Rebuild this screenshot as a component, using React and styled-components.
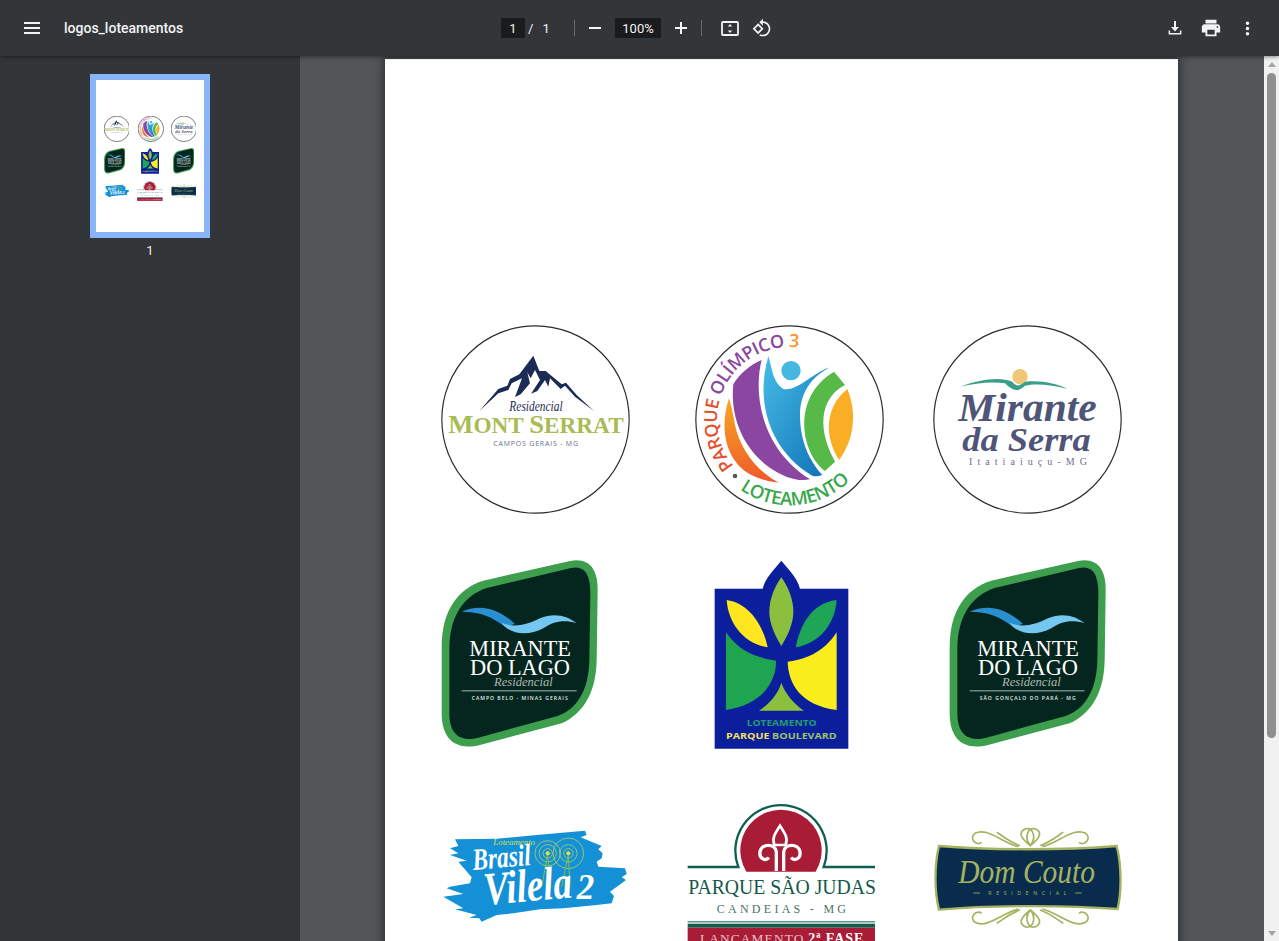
import styled, { createGlobalStyle } from 'styled-components'

const GlobalStyle = createGlobalStyle`
    html, body {
        margin: 0;
        height: 100%;
        overflow: hidden;
        background: #525659;
        font-family: Roboto, "Liberation Sans", sans-serif;
    }
`

const Shell = styled.div`
    width: 1279px;
    height: 941px;
    display: flex;
    flex-direction: column;
    overflow: hidden;
`
const Toolbar = styled.header`
    position: relative;
    z-index: 2;
    flex: 0 0 56px;
    display: flex;
    align-items: center;
    background: #323639;
    color: #f1f3f4;
    box-shadow: 0 1px 4px rgba(0, 0, 0, .45);
`
const LeftTools = styled.div`
    flex: 0 0 501px;
    display: flex;
    align-items: center;
    padding-left: 24px;
    box-sizing: border-box;
`
const Title = styled.span`
    margin-left: 24px;
    font-size: 14px;
    font-weight: 500;
`
const CenterTools = styled.div`
    display: flex;
    align-items: center;
`
const DarkField = styled.div`
    width: ${({ $w }) => $w}px;
    height: 20px;
    margin: ${({ $m }) => $m || 0};
    display: flex;
    align-items: center;
    justify-content: center;
    background: #191b1c;
    font-size: 13px;
`
const PageTotal = styled.div`
    width: 49px;
    display: flex;
    gap: 9px;
    padding-left: 3px;
    box-sizing: border-box;
    font-size: 13px;
`
const Divider = styled.span`
    width: 1px;
    height: 16px;
    margin: ${({ $m }) => $m};
    background: #696d70;
`
const IconButton = styled.div`
    width: ${({ $w }) => $w || 32}px;
    height: 32px;
    margin: ${({ $m }) => $m || 0};
    display: flex;
    align-items: center;
    justify-content: center;
    color: #f1f3f4;
`
const RightTools = styled.div`
    margin-left: auto;
    padding-right: 14px;
    display: flex;
    align-items: center;
`

const Body = styled.div`
    flex: 1;
    min-height: 0;
    display: flex;
`
const Sidebar = styled.aside`
    flex: 0 0 300px;
    display: flex;
    flex-direction: column;
    align-items: center;
    padding-top: 18px;
    box-sizing: border-box;
    background: #323639;
`
const ThumbFrame = styled.div`
    width: 108px;
    height: 152px;
    border: 6px solid #8ab4f8;
    background: #fff;
    overflow: hidden;
`
const ThumbLabel = styled.div`
    margin-top: 5px;
    color: #e8eaed;
    font-size: 13px;
    line-height: 16px;
`
const Viewer = styled.main`
    flex: 1;
    min-width: 0;
    padding: 3px 0 0 85px;
    box-sizing: border-box;
    background: #525659;
    overflow: hidden;
`
const Sheet = styled.div`
    --ring: ${({ $ring }) => $ring};
    width: 793px;
    height: 1122px;
    padding-top: 266px;
    box-sizing: border-box;
    background: #fff;
    zoom: ${({ $zoom }) => $zoom};
`
const ShadowedPage = styled.div`
    width: 793px;
    box-shadow: 0 0 9px 2px rgba(0, 0, 0, .45);
`
const LogoRow = styled.div`
    display: grid;
    grid-template-columns: ${({ $cols }) => $cols};
    padding-left: ${({ $left }) => $left}px;
    margin-bottom: ${({ $after }) => $after}px;
`
const LogoSvg = styled.svg`
    display: block;
`
const Ring = styled.circle`
    fill: #fff;
    stroke: #2b2b2b;
    stroke-width: var(--ring);
`
const Scrollbar = styled.div`
    flex: 0 0 15px;
    display: flex;
    flex-direction: column;
    align-items: center;
    background: #f1f1f1;
`
const ScrollArrow = styled.div`
    width: 0;
    height: 0;
    margin: ${({ $m }) => $m};
    border-left: 4px solid transparent;
    border-right: 4px solid transparent;
    ${({ $down }) => ($down ? 'border-top: 5px solid #a3a3a3;' : 'border-bottom: 5px solid #a3a3a3;')}
`
const ScrollThumb = styled.div`
    width: 9px;
    height: 665px;
    border-radius: 5px;
    background: #8f8f8f;
`

const LogoText = styled.text`
    font-family: ${({ $font }) => $font || '"Liberation Serif", serif'};
    font-size: ${({ $size }) => $size}px;
    font-weight: ${({ $weight }) => $weight || 400};
    font-style: ${({ $italic }) => ($italic ? 'italic' : 'normal')};
    fill: ${({ $fill }) => $fill};
`
// text that gets squeezed into the width the logo has, glyphs and all
const FitText = styled(LogoText).attrs({ lengthAdjust: 'spacingAndGlyphs' })``
const SANS = '"Open Sans", "Liberation Sans", sans-serif'

const MenuIcon = () => (
    <svg width="16" height="12" viewBox="0 0 16 12" fill="currentColor">
        <rect width="16" height="2" />
        <rect y="5" width="16" height="2" />
        <rect y="10" width="16" height="2" />
    </svg>
)
const MinusIcon = () => (
    <svg width="14" height="14" viewBox="0 0 14 14" fill="currentColor"><rect x="1" y="6" width="12" height="2" /></svg>
)
const PlusIcon = () => (
    <svg width="14" height="14" viewBox="0 0 14 14" fill="currentColor">
        <rect x="1" y="6" width="12" height="2" />
        <rect x="6" y="1" width="2" height="12" />
    </svg>
)
const FitIcon = () => (
    <svg width="18" height="15" viewBox="0 0 18 15" fill="none">
        <rect x="1" y="1" width="16" height="13" rx="1" stroke="currentColor" strokeWidth="1.8" />
        <path d="M9 2.9l2.2 2.5H6.8zM9 12.1l2.2-2.5H6.8z" fill="currentColor" />
    </svg>
)
const RotateIcon = () => (
    <svg width="20" height="20" viewBox="0 0 24 24" fill="currentColor">
        <path d="M7.34 6.41L.86 12.9l6.49 6.48 6.49-6.48-6.5-6.49zM3.69 12.9l3.66-3.66L11 12.9l-3.66 3.66-3.65-3.66zm15.67-6.26C17.61 4.88 15.3 4 13 4V.76L8.76 5 13 9.24V6c1.79 0 3.58.68 4.95 2.05 2.73 2.73 2.73 7.17 0 9.9C16.58 19.32 14.79 20 13 20c-.97 0-1.94-.21-2.84-.61l-1.49 1.49C10.02 21.62 11.51 22 13 22c2.3 0 4.61-.88 6.36-2.64 3.52-3.51 3.52-9.21 0-12.72z" />
    </svg>
)
const DownloadIcon = () => (
    <svg width="14" height="14" viewBox="0 0 14 14" fill="currentColor">
        <path d="M6 0h2v6h3L7 10.4 3 6h3z" />
        <path d="M.6 9.5h1.5V12h9.8V9.5h1.5V13.6H.6z" />
    </svg>
)
const PrintIcon = () => (
    <svg width="22" height="22" viewBox="0 0 24 24" fill="currentColor">
        <path d="M19 8H5c-1.66 0-3 1.34-3 3v6h4v4h12v-4h4v-6c0-1.66-1.34-3-3-3zm-3 11H8v-5h8v5zm3-7c-.55 0-1-.45-1-1s.45-1 1-1 1 .45 1 1-.45 1-1 1zm-1-9H6v4h12V3z" />
    </svg>
)
const MoreIcon = () => (
    <svg width="21" height="21" viewBox="0 0 24 24" fill="currentColor">
        <path d="M12 8c1.1 0 2-.9 2-2s-.9-2-2-2-2 .9-2 2 .9 2 2 2zm0 2c-1.1 0-2 .9-2 2s.9 2 2 2 2-.9 2-2-.9-2-2-2zm0 6c-1.1 0-2 .9-2 2s.9 2 2 2 2-.9 2-2-.9-2-2-2z" />
    </svg>
)

const MontSerrat = () => (
    <LogoSvg width="189" height="189" viewBox="33 30 567 567">
        <Ring cx="316.5" cy="313.5" r="281" />
        <path fill="#1c2b55" d="M148 288L205 222L232 212L240 192L268 178L310 122L328 168L347 168L395 208L408 203L440 240L492 288L435 245L405 212L392 222L360 190L355 215L345 195L322 228L303 236L330 195L315 165L302 190L292 172L300 205L272 238L255 246L276 190L245 205L235 225L205 235Z" />
        <FitText x="238" y="288" $size="42" $italic $fill="#1c2b55" textLength="160">Residencial</FitText>
        <FitText x="55" y="355" $size="68" $weight="700" $fill="#a9bb55" textLength="526"><tspan fontSize="78">M</tspan>ONT <tspan fontSize="78">S</tspan>ERRAT</FitText>
        <LogoText x="190" y="394" $size="21" $font={SANS} $fill="#68708f" textLength="254">CAMPOS GERAIS - MG</LogoText>
    </LogoSvg>
)

const ParqueOlimpico = () => (
    <LogoSvg width="189" height="189" viewBox="30 30 567 567">
        <defs>
            <linearGradient id="olimpOrange" x1="0" y1="0" x2="0" y2="1">
                <stop offset="0" stopColor="#f7a823" />
                <stop offset="1" stopColor="#f0592b" />
            </linearGradient>
            <linearGradient id="olimpBlue" x1="0" y1="0" x2="1" y2="1">
                <stop offset="0" stopColor="#45bde6" />
                <stop offset="1" stopColor="#0f6fb5" />
            </linearGradient>
            <path id="olimpTop" d="M146.5 453.5A218 218 0 0 1 444 139" />
            <path id="olimpBottom" d="M164.5 523.5A258 258 0 0 0 496 496" />
        </defs>
        <Ring cx="313.5" cy="313.5" r="281" />
        <path fill="url(#olimpOrange)" d="M132 250C105 330 115 430 195 478C225 494 255 500 282 503C215 470 165 400 150 330C145 300 140 275 132 250Z" />
        <path fill="#8a46a0" d="M145 208C165 175 195 150 230 135C205 230 225 400 375 493C340 500 300 490 250 455C170 395 135 300 145 208Z" />
        <path fill="url(#olimpBlue)" d="M250 124C262 160 262 200 295 222C340 230 385 170 437 157C385 180 345 230 345 300C345 380 375 440 412 480C395 485 385 485 378 480C270 415 205 280 250 124Z" />
        <circle cx="318" cy="167" r="29" fill="#45b8e0" />
        <path fill="#57b947" d="M447 170L480 210C420 240 385 320 450 440L420 468C345 410 320 245 447 170Z" />
        <path fill="#f9ae26" d="M487 222C515 290 510 370 462 435C420 370 415 280 487 222Z" />
        <circle cx="150" cy="483" r="7" fill="#55585c" />
        <LogoText $font={SANS} $size="54" $weight="600" $fill="#8a46a0">
            <textPath href="#olimpTop" textLength="522">
                <tspan fill="#e4502e">PARQUE </tspan>OLÍMPICO <tspan fill="#f39a2a">3</tspan>
            </textPath>
        </LogoText>
        <LogoText $font={SANS} $size="56" $weight="600" $fill="#37a84c">
            <textPath href="#olimpBottom" textLength="360">LOTEAMENTO</textPath>
        </LogoText>
    </LogoSvg>
)

const MiranteSerra = () => (
    <LogoSvg width="189" height="189" viewBox="24 30 567 567">
        <Ring cx="307.5" cy="313.5" r="281" />
        <circle cx="285" cy="185" r="23" fill="#eec877" />
        <path fill="#3a9f88" d="M105 215C170 192 225 185 262 200C275 215 280 215 300 200C350 195 395 205 428 222C380 208 330 205 300 212C275 235 262 225 240 205C200 198 150 205 105 215Z" />
        <FitText x="100" y="318" $size="118" $weight="700" $italic $fill="#4f5578" textLength="415">Mirante</FitText>
        <FitText x="112" y="408" $size="104" $weight="700" $italic $fill="#4f5578" textLength="385">da Serra</FitText>
        <LogoText x="132" y="450" $size="30" $fill="#6a7090" textLength="354">Itatiaiuçu-MG</LogoText>
    </LogoSvg>
)

const MiranteLago = ({ place }) => (
    <LogoSvg width="157" height="189" viewBox="33 30 471 567">
        <path fill="#3d9e4e" d="M420 33C480 22 503 60 503 120L500 330C498 440 450 495 395 520L150 585C70 605 35 560 35 490L35 290C35 180 85 115 160 92Z" />
        <path fill="#05261f" d="M423 54C463 45 481 72 481 130L478 330C476 425 438 478 383 498L145 563C85 578 58 548 58 490L58 290C60 197 102 137 170 114Z" />
        <path fill="#2a8fd0" d="M95 185C140 165 195 165 255 222L225 230C185 200 150 185 95 185Z" />
        <path fill="#74c7f0" d="M215 218C250 235 290 225 330 205C370 188 410 195 440 220C400 208 370 215 340 235C290 262 235 250 215 218Z" />
        <FitText x="118" y="318" $size="72" $fill="#fff" textLength="305">MIRANTE</FitText>
        <FitText x="120" y="375" $size="72" $fill="#fff" textLength="300">DO LAGO</FitText>
        <FitText x="192" y="408" $size="38" $italic $fill="#aeb8b0" textLength="176">Residencial</FitText>
        <rect x="95" y="421" width="345" height="3" fill="#a9b3ac" />
        <LogoText x="125" y="450" $size="15" $weight="600" $font={SANS} $fill="#e6ebe8" textLength="288">{place}</LogoText>
    </LogoSvg>
)

const Boulevard = () => (
    <LogoSvg width="135" height="189" viewBox="42 30 405 567">
        <path fill="#0b1f9c" d="M44 116H188C195 85 225 55 244 32C263 55 293 85 300 116H445V596H44Z" />
        <path fill="#8dbf3f" d="M244 82C265 110 280 150 280 185C280 225 260 260 244 288C228 260 208 225 208 185C208 150 223 110 244 82Z" />
        <path fill="#ffe61f" d="M80 150C150 160 190 230 203 292C130 280 85 220 80 150Z" />
        <path fill="#1ea656" d="M410 150C330 160 300 230 287 292C360 280 405 220 410 150Z" />
        <path fill="#1fa450" d="M78 247C120 310 180 325 228 332C230 390 190 465 78 480Z" />
        <path fill="#f9ee1c" d="M410 247C370 310 310 330 263 335C265 400 300 465 410 480Z" />
        <path fill="#8dbf3f" d="M244 398C255 430 280 460 312 482H177C210 460 235 430 244 398Z" />
        <FitText x="140" y="527" $size="26" $weight="700" $font={SANS} $fill="#1f9e6e" textLength="210">LOTEAMENTO</FitText>
        <FitText x="78" y="567" $size="27" $weight="700" $font={SANS} $fill="#9cc36b" textLength="332">
            <tspan fill="#f3e05a">PARQUE</tspan> BOULEVARD
        </FitText>
    </LogoSvg>
)

const BrasilVilela = () => (
    <LogoSvg width="185" height="146" viewBox="39 39 555 438">
        <path fill="#1490d6" d="M75 148L200 146L320 135L465 122L470 135L452 142L515 168L505 178L518 190L515 205L500 215L505 230L585 235L590 252L575 262L588 270L540 305L552 318L545 340L500 345L400 355L330 358L250 370L200 375L155 395L148 385L118 383L140 375L75 358L100 355L40 320L100 312L50 295L60 290L120 280L125 262L85 215L110 212L60 195L85 190L60 175L85 168Z" />
        <g fill="none" stroke="#cfe04a" strokeWidth="2">
            <circle cx="353" cy="190" r="14" />
            <circle cx="353" cy="190" r="26" />
            <circle cx="353" cy="190" r="38" />
            <circle cx="415" cy="190" r="14" />
            <circle cx="415" cy="190" r="26" />
            <circle cx="415" cy="190" r="46" />
            <path d="M353 195L335 290M353 195L362 290M415 195L395 290M415 195L420 290" stroke="#7fc04a" strokeWidth="3" />
        </g>
        <circle cx="353" cy="190" r="6" fill="#e2e83a" />
        <circle cx="415" cy="190" r="6" fill="#e2e83a" />
        <FitText x="190" y="165" $size="27" $italic $fill="#d7e23f" textLength="125">Loteamento</FitText>
        <FitText x="130" y="240" $size="92" $weight="700" $italic $fill="#fff" textLength="175" transform="rotate(-5 130 240)">Brasil</FitText>
        <FitText x="165" y="345" $size="140" $weight="700" $italic $fill="#fff" textLength="265" transform="rotate(-5 165 345)">Vilela</FitText>
        <LogoText x="440" y="328" $size="105" $weight="700" $italic $fill="#fff">2</LogoText>
    </LogoSvg>
)

const SaoJudas = () => (
    <LogoSvg width="189" height="146" viewBox="36 24 567 438">
        <path fill="#a81c36" d="M214 230A122 122 0 1 1 422 230Z" />
        <path fill="none" stroke="#0f5f50" strokeWidth="7" d="M38 216H190A137 137 0 1 1 446 216H600" />
        <g fill="none" stroke="#fff" strokeWidth="10">
            <path d="M315 92C300 115 290 130 298 150H332C340 130 330 115 315 92Z" strokeWidth="8" />
            <path d="M304 228V170C300 145 260 145 255 170C252 190 270 200 282 188" />
            <path d="M326 228V170C330 145 370 145 375 170C378 190 360 200 348 188" />
        </g>
        <FitText x="40" y="296" $size="64" $fill="#14584a" textLength="563">PARQUE SÃO JUDAS</FitText>
        <LogoText x="125" y="355" $size="36" $fill="#4a7268" textLength="388">CANDEIAS - MG</LogoText>
        <rect x="38" y="379" width="562" height="3" fill="#0f5f50" />
        <rect x="38" y="386" width="562" height="12" fill="#0f5f50" />
        <rect x="38" y="398" width="562" height="64" fill="#a81c36" />
        <LogoText x="75" y="445" $size="40" $fill="#e9c4c8" textLength="310">LANÇAMENTO</LogoText>
        <LogoText x="400" y="445" $size="42" $weight="700" $fill="#fff" textLength="165">2ª FASE</LogoText>
    </LogoSvg>
)

const DomCouto = () => {
    const flourish = 'M316 92C295 75 275 55 300 42C325 35 335 70 316 92C297 70 307 35 332 42C357 55 337 75 316 92M285 92C250 80 230 60 215 52M345 92C380 80 400 60 415 52M280 95C235 85 185 35 150 55C130 70 155 95 170 82M352 95C397 85 447 35 482 55C502 70 477 95 462 82'
    return (
        <LogoSvg width="189" height="146" viewBox="24 -36 567 438">
            <g fill="none" stroke="#a3b361" strokeWidth="5">
                <path d={flourish} />
                <path d={flourish} transform="translate(0 377) scale(1 -1)" />
            </g>
            <path fill="#0a2c4c" stroke="#a3b361" strokeWidth="7" d="M42 93C200 106 420 106 575 93C590 150 590 230 578 282C420 270 200 270 42 284C28 230 28 150 42 93Z" />
            <FitText x="100" y="205" $size="98" $italic $fill="#a3b361" textLength="410">Dom Couto</FitText>
            <LogoText x="190" y="241" $size="16" $font={SANS} $fill="#a3b361" textLength="234">RESIDENCIAL</LogoText>
            <path d="M145 234H165M450 234H470" stroke="#a3b361" strokeWidth="2.5" />
        </LogoSvg>
    )
}

// same sheet is used for the big page and for the thumbnail
const PdfSheet = ({ zoom = 1, ring = 3.5 }) => (
    <Sheet $zoom={zoom} $ring={ring}>
        <LogoRow $cols="254px 238px 189px" $left={56} $after={46}>
            <MontSerrat />
            <ParqueOlimpico />
            <MiranteSerra />
        </LogoRow>
        <LogoRow $cols="273px 235px 157px" $left={56} $after={54}>
            <MiranteLago place="CAMPO BELO - MINAS GERAIS" />
            <Boulevard />
            <MiranteLago place="SÃO GONÇALO DO PARÁ - MG" />
        </LogoRow>
        <LogoRow $cols="244px 246px 189px" $left={58} $after={0}>
            <BrasilVilela />
            <SaoJudas />
            <DomCouto />
        </LogoRow>
    </Sheet>
)

const App = () => (
    <Shell>
        <GlobalStyle />
        <Toolbar>
            <LeftTools>
                <MenuIcon />
                <Title>logos_loteamentos</Title>
            </LeftTools>
            <CenterTools>
                <DarkField $w={24}>1</DarkField>
                <PageTotal><span>/</span><span>1</span></PageTotal>
                <Divider $m="0 4px 0 0" />
                <IconButton><MinusIcon /></IconButton>
                <DarkField $w={46} $m="0 0 0 4px">100%</DarkField>
                <IconButton $m="0 4px"><PlusIcon /></IconButton>
                <Divider $m="0 12px 0 0" />
                <IconButton><FitIcon /></IconButton>
                <IconButton><RotateIcon /></IconButton>
            </CenterTools>
            <RightTools>
                <IconButton $w={36}><DownloadIcon /></IconButton>
                <IconButton $w={36}><PrintIcon /></IconButton>
                <IconButton $w={36}><MoreIcon /></IconButton>
            </RightTools>
        </Toolbar>
        <Body>
            <Sidebar>
                <ThumbFrame><PdfSheet zoom={108 / 793} ring={13} /></ThumbFrame>
                <ThumbLabel>1</ThumbLabel>
            </Sidebar>
            <Viewer>
                <ShadowedPage><PdfSheet /></ShadowedPage>
            </Viewer>
            <Scrollbar>
                <ScrollArrow $m="6px 0 6px" />
                <ScrollThumb />
                <ScrollArrow $down $m="auto 0 5px" />
            </Scrollbar>
        </Body>
    </Shell>
)

export default App
